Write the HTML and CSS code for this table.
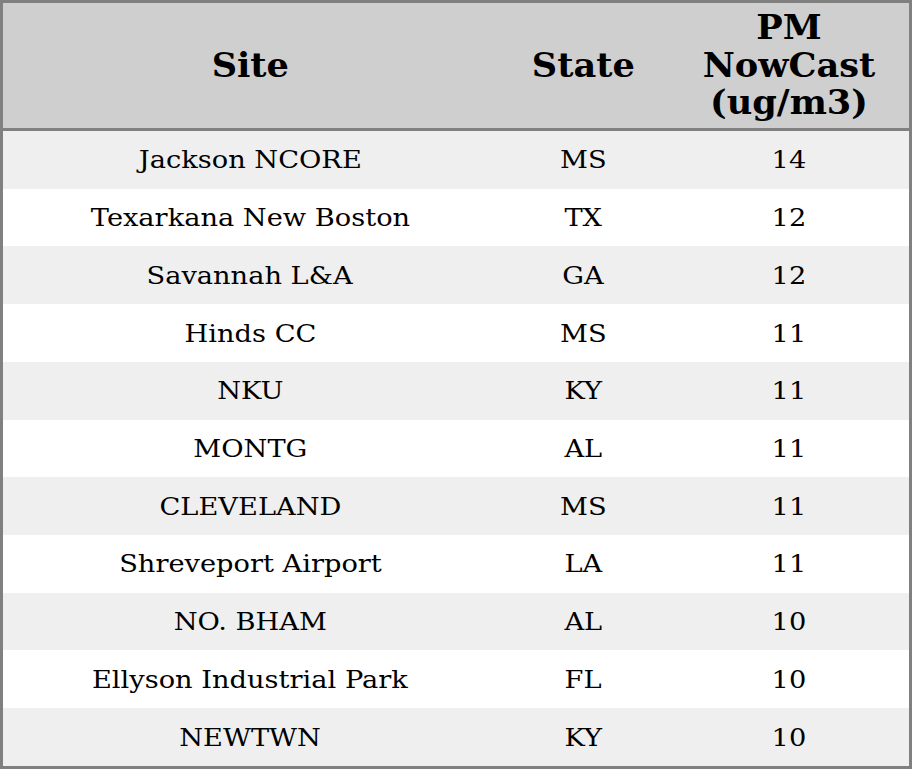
FILE: index.html
```html
<!DOCTYPE html>
<html>
<head>
<meta charset="utf-8">
<link rel="stylesheet" href="styles.css">
</head>
<body>
<table class="data">
  <thead>
    <tr>
      <th class="c-site"><span class="t">Site</span></th>
      <th class="c-state"><span class="t">State</span></th>
      <th class="c-pm"><span class="t">PM<br>NowCast<br>(ug/m3)</span></th>
    </tr>
  </thead>
  <tbody>
    <tr><td><span class="t">Jackson NCORE</span></td><td><span class="t">MS</span></td><td><span class="t">14</span></td></tr>
    <tr><td><span class="t">Texarkana New Boston</span></td><td><span class="t">TX</span></td><td><span class="t">12</span></td></tr>
    <tr><td><span class="t">Savannah L&amp;A</span></td><td><span class="t">GA</span></td><td><span class="t">12</span></td></tr>
    <tr><td><span class="t">Hinds CC</span></td><td><span class="t">MS</span></td><td><span class="t">11</span></td></tr>
    <tr><td><span class="t">NKU</span></td><td><span class="t">KY</span></td><td><span class="t">11</span></td></tr>
    <tr><td><span class="t">MONTG</span></td><td><span class="t">AL</span></td><td><span class="t">11</span></td></tr>
    <tr><td><span class="t">CLEVELAND</span></td><td><span class="t">MS</span></td><td><span class="t">11</span></td></tr>
    <tr><td><span class="t">Shreveport Airport</span></td><td><span class="t">LA</span></td><td><span class="t">11</span></td></tr>
    <tr><td><span class="t">NO. BHAM</span></td><td><span class="t">AL</span></td><td><span class="t">10</span></td></tr>
    <tr><td><span class="t">Ellyson Industrial Park</span></td><td><span class="t">FL</span></td><td><span class="t">10</span></td></tr>
    <tr><td><span class="t">NEWTWN</span></td><td><span class="t">KY</span></td><td><span class="t">10</span></td></tr>
  </tbody>
</table>
</body>
</html>
```
FILE: styles.css
```css
html, body {
  margin: 0;
  padding: 0;
  background: #ffffff;
}
.data {
  width: 912px;
  border: 3px solid #808080;
  border-spacing: 0;
  table-layout: fixed;
  font-family: "DejaVu Serif", serif;
  color: #000;
}
.t {
  display: inline-block;
  transform-origin: center center;
}
.data th {
  background: #cfcfcf;
  font-size: 33px;
  font-weight: bold;
  line-height: 37.5px;
  height: 128px;
  padding: 0;
  text-align: center;
  vertical-align: middle;
  border-bottom: 3px solid #808080;
  box-sizing: border-box;
}
.data th .t {
  transform: scaleX(1.065);
}
.c-site { width: 494px; }
.c-state { width: 172px; }
.c-pm { width: 240px; }
.data td {
  font-size: 25px;
  height: 57.727px;
  padding: 0;
  text-align: center;
  vertical-align: middle;
  box-sizing: border-box;
}
.data td .t {
  transform: scaleX(1.09);
}
.data tbody tr:nth-child(odd) td {
  background: #efefef;
}
.data tbody tr:nth-child(even) td {
  background: #ffffff;
}
```
